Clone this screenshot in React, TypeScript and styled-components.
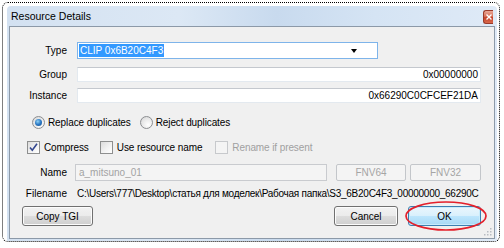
import styled, { createGlobalStyle } from "styled-components";

const GlobalStyle = createGlobalStyle`
  html, body {
    margin: 0;
    padding: 0;
    background: #ffffff;
  }
  body {
    font-family: "Liberation Sans", Arial, sans-serif;
    font-size: 10px;
    color: #000;
  }
`;

const App = () => {
  return (
    <>
      <GlobalStyle />
      <Sheet>
        <Window>
          <TitleBar>
            <Title>Resource Details</Title>
            <CloseButton>
              <svg width="6" height="6" viewBox="0 0 6 6">
                <path d="M0.5 0.5 L5.5 5.5 M5.5 0.5 L0.5 5.5" stroke="#fff" strokeWidth="1.4" />
              </svg>
            </CloseButton>
          </TitleBar>
          <Client>
            <FieldRow $top={15}>
              <Label>Type</Label>
              <Combo>
                <Selected>CLIP 0x6B20C4F3</Selected>
                <Caret />
              </Combo>
            </FieldRow>
            <FieldRow $top={8}>
              <Label>Group</Label>
              <TextBox>0x00000000</TextBox>
            </FieldRow>
            <FieldRow $top={6}>
              <Label>Instance</Label>
              <TextBox>0x66290C0CFCEF21DA</TextBox>
            </FieldRow>

            <OptionRow $top={13} $left={22}>
              <Option $gap={9}>
                <Radio $checked />
                Replace duplicates
              </Option>
              <Option>
                <Radio />
                Reject duplicates
              </Option>
            </OptionRow>

            <OptionRow $top={12} $left={17}>
              <Option $gap={11}>
                <Check>
                  <svg width="11" height="11" viewBox="0 0 11 11">
                    <path d="M2 5.5 L4.3 8.3 L9 1.8" fill="none" stroke="#34478f" strokeWidth="1.6" />
                  </svg>
                </Check>
                Compress
              </Option>
              <Option $gap={13}>
                <Check />
                Use resource name
              </Option>
              <Option $disabled>
                <Check $disabled />
                Rename if present
              </Option>
            </OptionRow>

            <FieldRow $top={10} $gap={8}>
              <Label>Name</Label>
              <NameBox>a_mitsuno_01</NameBox>
              <HashButton $w={70} $left={9}>FNV64</HashButton>
              <HashButton $w={71} $left={4}>FNV32</HashButton>
            </FieldRow>

            <FieldRow $top={6}>
              <Label>Filename</Label>
              <Path>
                C:\Users\777\Desktop\статья для моделек\Рабочая папка\S3_6B20C4F3_00000000_66290C
              </Path>
            </FieldRow>

            <ButtonBar>
              <PushButton $w={71}>Copy TGI</PushButton>
              <Spacer />
              <PushButton $w={64}>Cancel</PushButton>
              <Marked>
                <PushButton $w={73} $default>
                  OK
                </PushButton>
                <Ellipse width="84" height="32" viewBox="0 0 84 32">
                  <ellipse cx="42" cy="16" rx="40" ry="14" fill="none" stroke="#e3202b" strokeWidth="1.7" />
                </Ellipse>
              </Marked>
            </ButtonBar>
            <Grip width="9" height="9" viewBox="0 0 9 9">
              <g fill="#b8bcc2">
                <rect x="7" y="1" width="1.5" height="1.5" />
                <rect x="4" y="4" width="1.5" height="1.5" />
                <rect x="7" y="4" width="1.5" height="1.5" />
                <rect x="1" y="7" width="1.5" height="1.5" />
                <rect x="4" y="7" width="1.5" height="1.5" />
                <rect x="7" y="7" width="1.5" height="1.5" />
              </g>
            </Grip>
          </Client>
        </Window>
      </Sheet>
    </>
  );
};

const Sheet = styled.div`
  box-sizing: border-box;
  margin: 2px 0 0 2px;
  width: 498px;
  height: 240px;
  border: 1px dotted #000;
  border-radius: 6px;
  padding: 3px 2px 0 4px;
  display: flex;
`;

const Window = styled.div`
  flex: 1;
  min-width: 0;
  display: flex;
  flex-direction: column;
  padding: 0 2px 2px 2px;
  background: linear-gradient(90deg, #d3e1f1 0%, #dce8f5 35%, #c8daee 55%, #d5e4f4 75%, #dfeaf7 100%);
  border-top-left-radius: 4px;
  border-top-right-radius: 4px;
`;

const TitleBar = styled.div`
  height: 20px;
  display: flex;
  align-items: flex-start;
  padding: 0 2px 0 2px;
`;

const Title = styled.span`
  font-family: "Liberation Sans", Arial, sans-serif;
  font-size: 10.5px;
  line-height: 20px;
  color: #000;
`;

const CloseButton = styled.div`
  margin: 4px 0 0 auto;
  width: 10px;
  height: 14px;
  box-sizing: border-box;
  border: 1px solid #9a3a2a;
  border-right: none;
  border-radius: 3px 0 0 3px;
  background: linear-gradient(180deg, #e9a898 0%, #d56f58 45%, #c5432b 55%, #d8694c 100%);
  display: flex;
  align-items: center;
  justify-content: center;
`;

const Client = styled.div`
  position: relative;
  flex: 1;
  min-width: 0;
  display: flex;
  flex-direction: column;
  background: #f0f0f0;
  border: 1px solid #8c99a8;
  padding: 0 13px 0 0;
`;

const FieldRow = styled.div<{ $top: number; $gap?: number }>`
  display: flex;
  align-items: center;
  gap: ${(p) => p.$gap ?? 10}px;
  margin-top: ${(p) => p.$top}px;
  min-width: 0;
`;

const Label = styled.span`
  width: 57px;
  flex: none;
  text-align: right;
  white-space: nowrap;
`;

const Combo = styled.div`
  box-sizing: border-box;
  width: 301px;
  height: 17px;
  background: #fff;
  border: 1px solid #7eb4ea;
  display: flex;
  align-items: center;
  padding: 0 20px 0 1px;
`;

const Selected = styled.span`
  background: #3399ff;
  color: #fff;
  line-height: 13px;
  padding: 0 1px;
`;

const Caret = styled.span`
  margin-left: auto;
  width: 0;
  height: 0;
  border-left: 3.5px solid transparent;
  border-right: 3.5px solid transparent;
  border-top: 4px solid #000;
`;

const TextBox = styled.div`
  box-sizing: border-box;
  flex: 1;
  min-width: 0;
  height: 15px;
  background: #fff;
  border: 1px solid #e3e9ef;
  border-top-color: #c4c8ce;
  text-align: right;
  padding: 0 2px;
  line-height: 13px;
  white-space: nowrap;
  overflow: hidden;
`;

const OptionRow = styled.div<{ $top: number; $left: number }>`
  display: flex;
  align-items: center;
  margin-top: ${(p) => p.$top}px;
  padding-left: ${(p) => p.$left}px;
  height: 13px;
`;

const Option = styled.label<{ $gap?: number; $disabled?: boolean }>`
  display: flex;
  align-items: center;
  gap: 3px;
  margin-right: ${(p) => p.$gap ?? 0}px;
  color: ${(p) => (p.$disabled ? "#a0a0a0" : "#000")};
  white-space: nowrap;
  letter-spacing: -0.1px;
`;

const Radio = styled.span<{ $checked?: boolean }>`
  box-sizing: border-box;
  width: 13px;
  height: 13px;
  border-radius: 50%;
  border: 1px solid #8c8e91;
  background: radial-gradient(circle at 65% 70%, #ffffff 0%, #e6e6e6 60%, #cfd0d2 100%);
  display: flex;
  align-items: center;
  justify-content: center;
  &::after {
    content: "";
    display: ${(p) => (p.$checked ? "block" : "none")};
    width: 7px;
    height: 7px;
    border-radius: 50%;
    background: radial-gradient(circle at 40% 35%, #8fd2f5 0%, #2b78c4 50%, #164f8c 100%);
  }
`;

const Check = styled.span<{ $disabled?: boolean }>`
  box-sizing: border-box;
  width: 13px;
  height: 13px;
  margin-right: 1px;
  border: 1px solid ${(p) => (p.$disabled ? "#c7c9cc" : "#8e8f8f")};
  background: ${(p) =>
    p.$disabled ? "#f4f4f4" : "linear-gradient(135deg, #dcdcdc 0%, #f2f2f2 55%, #ffffff 100%)"};
  display: flex;
  align-items: center;
  justify-content: center;
`;

const NameBox = styled.div`
  box-sizing: border-box;
  width: 252px;
  height: 17px;
  background: #f4f4f4;
  border: 1px solid #c9cbcf;
  color: #a3a3a3;
  padding: 0 3px;
  line-height: 15px;
`;

const HashButton = styled.div<{ $w: number; $left: number }>`
  box-sizing: border-box;
  width: ${(p) => p.$w}px;
  height: 17px;
  margin-left: ${(p) => p.$left - 8}px;
  background: #f4f4f4;
  border: 1px solid #c3c6ca;
  border-radius: 2px;
  color: #a5a5a5;
  display: flex;
  align-items: center;
  justify-content: center;
`;

const Path = styled.div`
  flex: 1;
  min-width: 0;
  white-space: nowrap;
  overflow: hidden;
  line-height: 13px;
  letter-spacing: -0.26px;
`;

const ButtonBar = styled.div`
  display: flex;
  align-items: center;
  gap: 10px;
  margin-top: 6px;
  padding-left: 12px;
`;

const Spacer = styled.div`
  flex: 1;
`;

const PushButton = styled.div<{ $w: number; $default?: boolean }>`
  box-sizing: border-box;
  width: ${(p) => p.$w}px;
  height: 20px;
  border-radius: 3px;
  border: 1px solid ${(p) => (p.$default ? "#3c7fb1" : "#707070")};
  background: ${(p) =>
    p.$default
      ? "linear-gradient(180deg, #eaf6fd 0%, #d9f0fc 50%, #bee6fd 50%, #a7d9f5 100%)"
      : "linear-gradient(180deg, #f2f2f2 0%, #ebebeb 50%, #dddddd 50%, #cfcfcf 100%)"};
  box-shadow: inset 0 0 0 1px ${(p) => (p.$default ? "#c8ebfb" : "#fcfcfc")};
  display: flex;
  align-items: center;
  justify-content: center;
`;

const Marked = styled.div`
  position: relative;
  display: flex;
`;

const Ellipse = styled.svg`
  position: absolute;
  left: -4px;
  top: -6px;
  pointer-events: none;
`;

const Grip = styled.svg`
  position: absolute;
  right: 2px;
  bottom: 2px;
`;

export default App;
